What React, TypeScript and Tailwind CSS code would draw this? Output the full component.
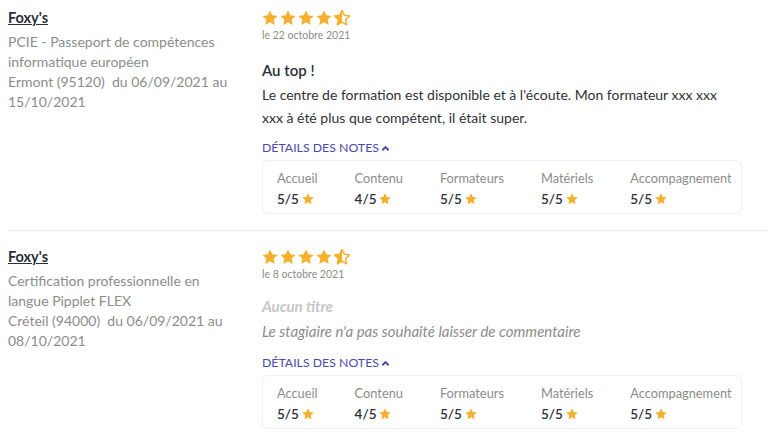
import React from "react";

const STAR = "M12 2.5l2.9 6.1 6.6.8-4.9 4.6 1.3 6.6L12 17.3l-5.9 3.3 1.3-6.6-4.9-4.6 6.6-.8z";

function Star({ size = 16, half = false, id = "h" }: { size?: number; half?: boolean; id?: string }) {
  if (!half) {
    return (
      <svg width={size} height={size} viewBox="2 2 20 20">
        <path d={STAR} fill="#f5b02e" />
      </svg>
    );
  }
  return (
    <svg width={size} height={size} viewBox="2 2 20 20">
      <defs>
        <clipPath id={id}>
          <rect x="0" y="0" width="12" height="24" />
        </clipPath>
      </defs>
      <path d={STAR} fill="none" stroke="#f5b02e" strokeWidth="1.8" strokeLinejoin="round" />
      <path d={STAR} fill="#f5b02e" clipPath={`url(#${id})`} />
    </svg>
  );
}

const notes = [
  { label: "Accueil", value: "5/5" },
  { label: "Contenu", value: "4/5" },
  { label: "Formateurs", value: "5/5" },
  { label: "Matériels", value: "5/5" },
  { label: "Accompagnement", value: "5/5" },
];

type Review = {
  formation: string[];
  date: string;
  title?: string;
  body?: string[];
};

const reviews: Review[] = [
  {
    formation: ["PCIE - Passeport de compétences", "informatique européen", "Ermont (95120)\u00a0 du 06/09/2021 au", "15/10/2021"],
    date: "le 22 octobre 2021",
    title: "Au top !",
    body: ["Le centre de formation est disponible et à l'écoute. Mon formateur xxx xxx", "xxx à été plus que compétent, il était super."],
  },
  {
    formation: ["Certification professionnelle en", "langue Pipplet FLEX", "Créteil (94000)\u00a0 du 06/09/2021 au", "08/10/2021"],
    date: "le 8 octobre 2021",
  },
];

function ReviewRow({ review, idx }: { review: Review; idx: number }) {
  return (
    <div className="flex pl-2">
      <div className="w-[254px] shrink-0">
        <div className="text-[14.5px] font-bold text-[#2a2f3c] underline leading-[20px] mt-[8px]">Foxy's</div>
        <div className="text-[14px] text-[#8c8c8c] leading-[20px] mt-[4px]">
          {review.formation.map((l, i) => (
            <div key={i} className="whitespace-pre">{l}</div>
          ))}
        </div>
      </div>
      <div className="w-[480px] shrink-0">
        <div className="flex gap-[2px] mt-[10px]">
          <Star />
          <Star />
          <Star />
          <Star />
          <Star half id={`half-${idx}`} />
        </div>
        <div className="text-[10.5px] text-[#8c8c8c] leading-[14px] mt-[2px]">{review.date}</div>
        {review.title ? (
          <>
            <div className="text-[15px] font-semibold text-[#2a2f3c] leading-[20px] mt-[18px]">{review.title}</div>
            <div className="text-[14px] text-[#2f3238] leading-[23px] mt-[3px]">
              {review.body!.map((l, i) => (
                <div key={i} className="whitespace-nowrap">{l}</div>
              ))}
            </div>
          </>
        ) : (
          <>
            <div className="text-[15px] font-bold italic text-[#c6c6c6] leading-[20px] mt-[15px]">Aucun titre</div>
            <div className="text-[15px] italic text-[#8c8c8c] leading-[20px] mt-[5px]">
              Le stagiaire n'a pas souhaité laisser de commentaire
            </div>
          </>
        )}
        <div className={`flex items-center gap-[2px] text-[12.3px] text-[#4b4ba8] leading-[16px] ${review.title ? "mt-[11px]" : "mt-[14px]"}`}>
          <span>DÉTAILS DES NOTES</span>
          <svg width="9" height="9" viewBox="0 0 10 10">
            <path d="M1.5 7L5 3.5 8.5 7" fill="none" stroke="#4b4ba8" strokeWidth="2.2" />
          </svg>
        </div>
        <div className="mt-[4px] flex gap-[37px] rounded-md border border-[#f0f0f0] px-[14px] pt-[8px] pb-[4px]">
          {notes.map((n) => (
            <div key={n.label}>
              <div className="text-[12.8px] text-[#8c8c8c] leading-[18px]">{n.label}</div>
              <div className="flex items-center gap-[3px] text-[13.5px] font-semibold text-[#2a2f3c] leading-[20px] mt-[2px]">
                <span>{n.value}</span>
                <Star size={12} />
              </div>
            </div>
          ))}
        </div>
      </div>
    </div>
  );
}

export default function App() {
  return (
    <div className="bg-white w-[768px] h-[435px] overflow-hidden" style={{ fontFamily: "Lato, 'Open Sans', sans-serif" }}>
      <ReviewRow review={reviews[0]} idx={0} />
      <div className="ml-2 mt-[16px] mb-[8px] border-t border-[#eeeeee]" />
      <ReviewRow review={reviews[1]} idx={1} />
    </div>
  );
}
